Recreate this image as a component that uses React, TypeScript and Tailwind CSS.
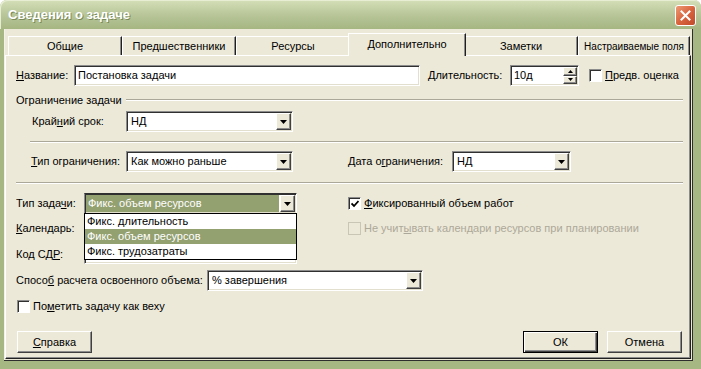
import type { ReactNode } from "react";

const sunken =
  "border border-t-[#8c8c8c] border-l-[#8c8c8c] border-r-white border-b-white shadow-[inset_1px_1px_0_#303030,inset_-1px_-1px_0_#e2dfcf]";
const raised =
  "border border-t-white border-l-white border-r-[#404040] border-b-[#404040] shadow-[inset_-1px_-1px_0_#8c8c8c]";

function Arrow({ up = false }: { up?: boolean }) {
  return (
    <svg width="7" height="4" viewBox="0 0 7 4">
      <path d={up ? "M0 4 L3.5 0 L7 4 Z" : "M0 0 L7 0 L3.5 4 Z"} fill="#000" />
    </svg>
  );
}

function Combo({ value, className, selected = false }: { value: string; className: string; selected?: boolean }) {
  return (
    <div className={`flex h-[21px] bg-white p-[1px] ${sunken} ${className}`}>
      <div className="flex min-w-0 flex-1 items-center pr-[1px]">
        {selected ? (
          <span className="flex h-[17px] flex-1 items-center bg-[#93a070] pl-[2px] text-white">{value}</span>
        ) : (
          <span className="pl-[3px]">{value}</span>
        )}
      </div>
      <div className={`flex w-[15px] items-center justify-center bg-[#ece9d8] ${raised}`}>
        <Arrow />
      </div>
    </div>
  );
}

function Check({ checked = false, disabled = false }: { checked?: boolean; disabled?: boolean }) {
  return (
    <div
      className={`flex h-[13px] w-[13px] shrink-0 items-center justify-center ${
        disabled
          ? "border border-[#c9c6b6] bg-[#ece9d8]"
          : "border border-t-[#8c8c8c] border-l-[#8c8c8c] border-r-white border-b-white bg-white shadow-[inset_1px_1px_0_#303030]"
      }`}
    >
      {checked && (
        <svg width="8" height="8" viewBox="0 0 8 8">
          <path d="M0.5 3.5 L3 6 L7.5 1" stroke="#000" strokeWidth="1.8" fill="none" />
        </svg>
      )}
    </div>
  );
}

function Etched({ className = "" }: { className?: string }) {
  return <div className={`h-[2px] border-t border-b border-t-[#aca899] border-b-white ${className}`} />;
}

function Tab({ children, active = false, last = false }: { children: ReactNode; active?: boolean; last?: boolean }) {
  if (active) {
    return (
      <div className="relative z-10 -mx-[2px] -mb-[1px] flex h-[23px] w-[118px] items-center justify-center border-t border-l border-r border-t-white border-l-white border-r-[#202020] bg-[#ece9d8] pb-[2px] shadow-[inset_-1px_0_0_#8c8c8c]">
        {children}
      </div>
    );
  }
  return (
    <div
      className={`flex h-[19px] min-w-0 shrink-0 items-center justify-center overflow-hidden whitespace-nowrap border-t border-l border-r border-t-white border-l-white border-r-[#202020] bg-[#ece9d8] shadow-[inset_-1px_0_0_#8c8c8c] ${
        last ? "w-[112px] text-[10px]" : "w-[114px]"
      }`}
    >
      {children}
    </div>
  );
}

function Button({ children, def = false }: { children: ReactNode; def?: boolean }) {
  return (
    <div
      className={`flex h-[22px] w-[75px] items-center justify-center bg-[#ece9d8] ${
        def
          ? "border border-black shadow-[inset_1px_1px_0_#fff,inset_-1px_-1px_0_#404040,inset_-2px_-2px_0_#8c8c8c]"
          : raised
      }`}
    >
      {children}
    </div>
  );
}

export default function App() {
  return (
    <div className="h-[369px] w-[701px] overflow-hidden bg-white font-['Liberation_Sans',Arial,sans-serif] text-[11px] leading-[13px] text-black">
      <div className="flex h-full flex-col rounded-t-[7px] bg-[#a7b784]">
        {/* title bar */}
        <div className="flex h-[29px] shrink-0 items-center justify-between rounded-t-[7px] bg-gradient-to-b from-[#d5dfb8] via-[#b8c699] to-[#a6b682] pl-[8px] pr-[5px] shadow-[inset_1px_1px_0_#e6edd2]">
          <span className="text-[13px] font-bold text-white [text-shadow:1px_1px_0_#7a8a58]">Сведения о задаче</span>
          <div className="mt-[2px] flex h-[21px] w-[21px] items-center justify-center rounded-[3px] border border-white bg-gradient-to-br from-[#ec9a76] via-[#d8643e] to-[#c24a2a]">
            <svg width="11" height="11" viewBox="0 0 11 11">
              <path d="M1.5 1.5 L9.5 9.5 M9.5 1.5 L1.5 9.5" stroke="#fff" strokeWidth="2" strokeLinecap="square" />
            </svg>
          </div>
        </div>

        <div className="flex flex-1 pb-[8px] pl-[4px] pr-[8px]">
          {/* client area */}
          <div className="flex w-[689px] flex-col border-r border-b border-r-[#2e2e2e] border-b-[#2e2e2e] bg-[#ece9d8] shadow-[inset_1px_0_0_#f4f2e8]">
            <div className="flex h-[26px] items-end pl-[4px] pt-[3px]">
              <Tab>Общие</Tab>
              <Tab>Предшественники</Tab>
              <Tab>Ресурсы</Tab>
              <Tab active>Дополнительно</Tab>
              <Tab>Заметки</Tab>
              <Tab last>Настраиваемые поля</Tab>
            </div>

            {/* tab panel */}
            <div className="mx-[1px] mb-[1px] flex-1 border border-t-white border-l-white border-r-[#202020] border-b-[#202020] shadow-[inset_-1px_-1px_0_#8c8c8c]">
              <div className="flex w-[677px] flex-col pl-[10px] pt-[9px]">
                {/* name row */}
                <div className="flex h-[21px] items-center">
                  <span className="w-[58px]">
                    <u>Н</u>азвание:
                  </span>
                  <div className={`flex h-[21px] w-[346px] items-center bg-white pl-[3px] ${sunken}`}>Постановка задачи</div>
                  <span className="ml-[8px] w-[82px]">
                    <u>Д</u>лительность:
                  </span>
                  <div className={`flex h-[21px] w-[69px] bg-white p-[1px] ${sunken}`}>
                    <span className="flex flex-1 items-center pl-[2px]">10д</span>
                    <div className="flex w-[14px] flex-col">
                      <div className={`flex flex-1 items-center justify-center bg-[#ece9d8] ${raised}`}>
                        <svg width="5" height="3" viewBox="0 0 5 3">
                          <path d="M0 3 L2.5 0 L5 3 Z" fill="#000" />
                        </svg>
                      </div>
                      <div className={`flex flex-1 items-center justify-center bg-[#ece9d8] ${raised}`}>
                        <svg width="5" height="3" viewBox="0 0 5 3">
                          <path d="M0 0 L5 0 L2.5 3 Z" fill="#000" />
                        </svg>
                      </div>
                    </div>
                  </div>
                  <div className="ml-[10px]">
                    <Check />
                  </div>
                  <span className="ml-[3px]">
                    <u>П</u>редв. оценка
                  </span>
                </div>

                {/* constraint group */}
                <div className="mt-[7px] flex h-[14px] items-center">
                  <span>Ограничение задачи</span>
                  <Etched className="ml-[4px] flex-1" />
                </div>

                <div className="mt-[4px] flex h-[21px] items-center pl-[16px]">
                  <span className="w-[94px]">
                    Край<u>н</u>ий срок:
                  </span>
                  <Combo value="НД" className="w-[167px]" />
                </div>

                <Etched className="ml-[14px] mt-[9px]" />

                <div className="mt-[8px] flex h-[21px] items-center pl-[15px]">
                  <span className="w-[95px]">
                    <u>Т</u>ип ограничения:
                  </span>
                  <Combo value="Как можно раньше" className="w-[167px]" />
                  <span className="ml-[55px] w-[104px]">
                    Дата о<u>г</u>раничения:
                  </span>
                  <Combo value="НД" className="w-[119px]" />
                </div>

                <Etched className="mt-[10px]" />

                {/* task type */}
                <div className="relative mt-[9px] flex h-[21px] items-center">
                  <span className="w-[68px]">
                    Тип зада<u>ч</u>и:
                  </span>
                  <Combo value="Фикс. объем ресурсов" className="w-[213px] border-t-[#303030]" selected />
                  <div className="ml-[51px]">
                    <Check checked />
                  </div>
                  <span className="ml-[3px]">
                    <u>Ф</u>иксированный объем работ
                  </span>

                  <div className="absolute left-[68px] top-[20px] z-20 flex w-[213px] flex-col border border-black bg-white">
                    <div className="flex h-[15px] items-center pl-[2px]">Фикс. длительность</div>
                    <div className="flex h-[15px] items-center bg-[#93a070] pl-[2px] text-white">Фикс. объем ресурсов</div>
                    <div className="flex h-[15px] items-center pl-[2px]">Фикс. трудозатраты</div>
                  </div>
                </div>

                <div className="mt-[4px] flex h-[21px] items-center">
                  <span className="w-[68px]">
                    <u>К</u>алендарь:
                  </span>
                  <Combo value="" className="w-[213px]" />
                  <div className="ml-[51px]">
                    <Check disabled />
                  </div>
                  <span className="ml-[3px] text-[#aca899]">
                    Не учит<u>ы</u>вать календари ресурсов при планировании
                  </span>
                </div>

                <div className="mt-[5px] flex h-[20px] items-center">
                  <span className="w-[68px]">
                    Код СД<u>Р</u>:
                  </span>
                  <div className={`h-[20px] w-[213px] bg-white ${sunken}`} />
                </div>

                <div className="mt-[6px] flex h-[21px] items-center">
                  <span className="w-[191px]">
                    Спосо<u>б</u> расчета освоенного объема:
                  </span>
                  <Combo value="% завершения" className="w-[216px]" />
                </div>

                <div className="mt-[9px] flex h-[13px] items-center pl-[1px]">
                  <Check />
                  <span className="ml-[3px]">
                    По<u>м</u>етить задачу как веху
                  </span>
                </div>

                <div className="mt-[18px] flex items-center pl-[1px] pr-[1px]">
                  <Button>
                    <span>
                      <u>С</u>правка
                    </span>
                  </Button>
                  <div className="flex-1" />
                  <Button def>ОК</Button>
                  <div className="ml-[9px]">
                    <Button>Отмена</Button>
                  </div>
                </div>
              </div>
            </div>
          </div>
        </div>
      </div>
    </div>
  );
}
